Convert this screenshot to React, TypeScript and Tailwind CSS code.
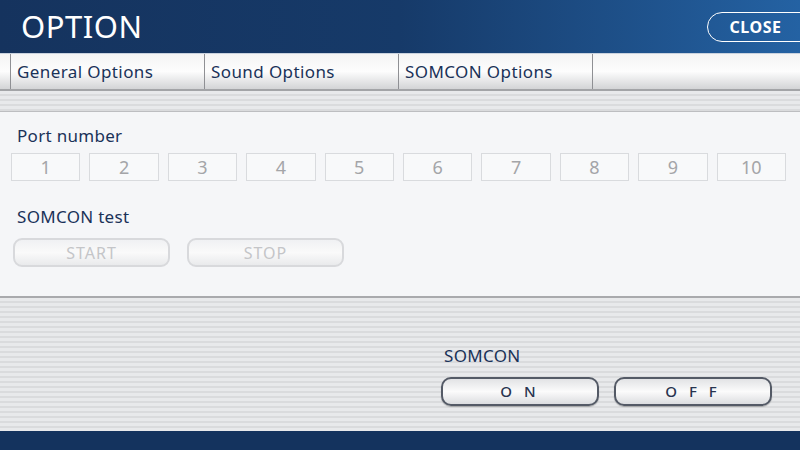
import React from "react";

const ports = [1, 2, 3, 4, 5, 6, 7, 8, 9, 10];
const tabs = ["General Options", "Sound Options", "SOMCON Options"];

const stripes =
  "bg-[repeating-linear-gradient(180deg,#e8e9eb_0px,#e8e9eb_3px,#dadbdd_3px,#dadbdd_5px)]";

export default function App() {
  return (
    <div
      className="w-[800px] h-[450px] flex flex-col overflow-hidden bg-[#e4e5e7]"
      style={{ fontFamily: '"Noto Sans", "Liberation Sans", sans-serif' }}
    >
      {/* header */}
      <div className="h-[54px] shrink-0 flex items-center justify-between border-b border-[#c9d2de] bg-gradient-to-r from-[#15335e] via-[#163a69] to-[#2462a3]">
        <h1 className="pl-[21px] text-[31px] leading-none text-white tracking-[0.5px]">
          OPTION
        </h1>
        <button className="mr-[-20px] h-[30px] w-[113px] rounded-full border-[1.5px] border-white pr-[16px] text-[16px] font-bold text-white tracking-[0.5px]">
          CLOSE
        </button>
      </div>

      {/* tabs */}
      <div className="h-[37px] shrink-0 flex border-b-2 border-[#a3a4a7] bg-gradient-to-b from-[#f4f4f4] via-[#fdfdfd] to-[#d3d4d6]">
        <div className="w-[10px]" />
        {tabs.map((t) => (
          <div
            key={t}
            className="w-[194px] border-l border-[#8f9094] pl-[6px] flex items-center text-[17px] tracking-[0.4px] text-[#1a3258]"
          >
            {t}
          </div>
        ))}
        <div className="flex-1 border-l border-[#8f9094]" />
      </div>

      <div className={`h-[20px] shrink-0 ${stripes}`} />

      {/* panel */}
      <div className="h-[187px] shrink-0 bg-[#f5f6f8] border-t border-[#bdbec1] border-b-2 border-b-[#a9aaad] px-[11px] pt-[13px]">
        <p className="pl-[6px] text-[17px] tracking-[0.3px] leading-[22px] text-[#1a3258]">
          Port number
        </p>
        <div className="mt-[6px] flex gap-[9px]">
          {ports.map((p) => (
            <div
              key={p}
              className="w-[69.4px] h-[28px] border border-[#d9dbde] bg-[#f8f9fa] flex items-center justify-center text-[18px] text-[#a4a5a8]"
            >
              {p}
            </div>
          ))}
        </div>
        <p className="mt-[25px] pl-[6px] text-[17px] tracking-[0.3px] leading-[22px] text-[#1a3258]">
          SOMCON test
        </p>
        <div className="mt-[10px] flex gap-[17px] pl-[2px]">
          {["START", "STOP"].map((b) => (
            <button
              key={b}
              className="w-[157px] h-[29px] rounded-[9px] border-2 border-[#d8d9dc] bg-gradient-to-b from-[#f0f1f3] via-[#fafafa] to-[#e9eaec] text-[16px] tracking-[1px] text-[#c4c5c8]"
            >
              {b}
            </button>
          ))}
        </div>
      </div>

      {/* lower area */}
      <div className={`flex-1 ${stripes} pl-[441px] pt-[47px]`}>
        <p className="pl-[3px] text-[17px] tracking-[0.3px] leading-[22px] text-[#1a3258]">
          SOMCON
        </p>
        <div className="mt-[10px] flex gap-[15px]">
          {["O N", "O F F"].map((b) => (
            <button
              key={b}
              className="w-[158px] h-[29px] rounded-[10px] border-2 border-[#545a66] bg-gradient-to-b from-[#e2e3e5] via-[#fbfbfb] to-[#dcdde0] shadow-[0_1px_1px_rgba(0,0,0,0.25)] text-[15px] font-medium tracking-[4px] text-[#283450]"
            >
              {b}
            </button>
          ))}
        </div>
      </div>

      {/* footer */}
      <div className="h-[19px] shrink-0 bg-[#14335e]" />
    </div>
  );
}
